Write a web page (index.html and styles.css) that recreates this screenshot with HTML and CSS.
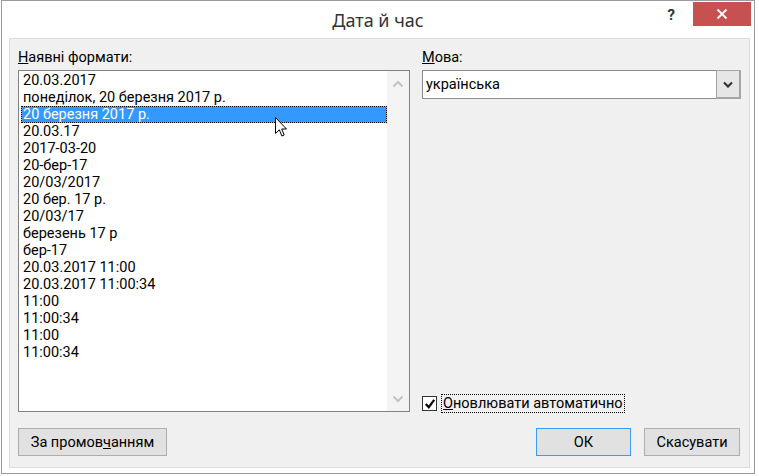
FILE: index.html
```html
<!DOCTYPE html>
<html lang="uk">
<head>
<meta charset="UTF-8">
<meta name="viewport" content="width=device-width, initial-scale=1.0">
<title>Дата й час</title>
<link rel="stylesheet" href="styles.css">
</head>
<body>
<div class="window">
    <div class="titlebar">
        <div></div>
        <div class="title">Дата й час</div>
        <div class="controls">
            <span class="help">?</span>
            <span class="close">
                <svg width="12" height="12" viewBox="0 0 12 12"><path d="M1.5 1.5 L10.5 10.5 M10.5 1.5 L1.5 10.5" stroke="#fff" stroke-width="1.8" fill="none"/></svg>
            </span>
        </div>
    </div>
    <div class="panel">
        <div class="main">
            <div class="col-left">
                <div class="label"><u>Н</u>аявні формати:</div>
                <div class="listbox">
                    <ul class="items">
                        <li>20.03.2017</li>
                        <li>понеділок, 20 березня 2017 р.</li>
                        <li class="selected">20 березня 2017 р.</li>
                        <li>20.03.17</li>
                        <li>2017-03-20</li>
                        <li>20-бер-17</li>
                        <li>20/03/2017</li>
                        <li>20 бер. 17 р.</li>
                        <li>20/03/17</li>
                        <li>березень 17 р</li>
                        <li>бер-17</li>
                        <li>20.03.2017 11:00</li>
                        <li>20.03.2017 11:00:34</li>
                        <li>11:00</li>
                        <li>11:00:34</li>
                        <li>11:00</li>
                        <li>11:00:34</li>
                    </ul>
                    <div class="scrollbar">
                        <svg width="12" height="8" viewBox="0 0 12 8"><path d="M1.5 6.5 L6 2 L10.5 6.5" stroke="#c2c2c2" stroke-width="2" fill="none"/></svg>
                        <svg width="12" height="8" viewBox="0 0 12 8"><path d="M1.5 1.5 L6 6 L10.5 1.5" stroke="#c2c2c2" stroke-width="2" fill="none"/></svg>
                    </div>
                    <!-- mouse pointer sitting over the list -->
                    <svg class="cursor" width="13" height="21" viewBox="0 0 13 21"><path d="M0.5 0.5 L0.5 16.5 L4.3 12.8 L6.9 19 L9.2 18 L6.7 12 L11.5 12 Z" fill="#fff" stroke="#000" stroke-width="1"/></svg>
                </div>
            </div>
            <div class="col-right">
                <div class="label"><u>М</u>ова:</div>
                <div class="select">
                    <span class="select-text">українська</span>
                    <span class="select-btn">
                        <svg width="10" height="7" viewBox="0 0 10 7"><path d="M1 1.5 L5 5.5 L9 1.5" stroke="#333" stroke-width="2.2" fill="none"/></svg>
                    </span>
                </div>
                <div class="check">
                    <span class="box">
                        <svg width="12" height="12" viewBox="0 0 12 12"><path d="M1.8 6 L4.8 9.2 L10.2 1.8" stroke="#000" stroke-width="2.2" fill="none"/></svg>
                    </span>
                    <span class="check-text"><u>О</u>новлювати автоматично</span>
                </div>
            </div>
        </div>
        <div class="buttons">
            <button class="btn btn-wide">За промов<u>ч</u>анням</button>
            <div class="spacer"></div>
            <button class="btn btn-default">ОК</button>
            <button class="btn">Скасувати</button>
        </div>
    </div>
</div>
</body>
</html>
```

FILE: styles.css
```css
body {
    margin: 0;
    background-color: #fff;
    font-family: Roboto, "Noto Sans", sans-serif;
    font-size: 14.5px;
    color: #000;
}

.window {
    width: 754px;
    height: 474px;
    margin-left: 1px;
    box-sizing: border-box;
    border: 1px solid #9b9b9b;
    background-color: #fff;
    display: flex;
    flex-direction: column;
}

.titlebar {
    height: 37px;
    display: grid;
    grid-template-columns: 1fr auto 1fr;
}

.title {
    font-family: "Noto Sans", sans-serif;
    font-size: 18px;
    color: #333;
    line-height: 24px;
    padding-top: 7px;
}

.controls {
    display: flex;
    justify-content: flex-end;
    align-items: flex-start;
    margin-right: 3px;
    margin-top: 1px;
}

.help {
    font-size: 15px;
    font-weight: bold;
    color: #333;
    line-height: 18px;
    margin-top: 4px;
    margin-right: 18px;
}

.close {
    width: 58px;
    height: 24px;
    background-color: #c75050;
    display: flex;
    justify-content: center;
    align-items: center;
}

.panel {
    margin: 0 4px 5px 7px;
    height: 430px;
    box-sizing: border-box;
    border: 1px solid #dcdcdc;
    background-color: #f0f0f0;
    padding: 10px 8px 11px 8px;
    display: flex;
    flex-direction: column;
}

.main {
    display: flex;
    gap: 12px;
}

.col-left {
    width: 392px;
}

.col-right {
    width: 319px;
    display: flex;
    flex-direction: column;
}

.label {
    line-height: 17px;
    margin-bottom: 4px;
}

.listbox {
    position: relative;
    height: 342px;
    box-sizing: border-box;
    border: 1px solid #828282;
    background-color: #fff;
    display: flex;
}

.items {
    list-style: none;
    margin: 0;
    padding: 1px 0 0 2px;
    flex: 1;
}

.items li {
    height: 17px;
    padding-left: 2px;
    line-height: 17px;
    white-space: nowrap;
}

.items li.selected {
    color: #fff;
    background-color: #3399ff;
    box-shadow: inset 0 0 0 1px #f39a1e;
    outline: 1px dotted #000;
    outline-offset: -1px;
}

.scrollbar {
    width: 22px;
    background-color: #f4f4f4;
    display: flex;
    flex-direction: column;
    justify-content: space-between;
    align-items: center;
    padding: 9px 0 8px;
}

.cursor {
    position: absolute;
    left: 256px;
    top: 46px;
}

.select {
    height: 29px;
    box-sizing: border-box;
    border: 1px solid #8c8c8c;
    background-color: #fff;
    display: flex;
}

.select-text {
    flex: 1;
    line-height: 27px;
    padding-left: 3px;
}

.select-btn {
    width: 22px;
    margin: -1px -1px -1px 0;
    border: 1px solid #a5a5a5;
    border-right-width: 2px;
    border-bottom-width: 2px;
    background-color: #e6e6e6;
    display: flex;
    justify-content: center;
    align-items: center;
}

.check {
    margin-top: auto;
    margin-bottom: -1px;
    display: flex;
    align-items: center;
}

.box {
    width: 15px;
    height: 15px;
    box-sizing: border-box;
    border: 1px solid #333;
    background-color: #fff;
    display: flex;
    justify-content: center;
    align-items: center;
    margin-right: 4px;
}

.check-text {
    border: 1px dotted #000;
    padding: 0 1px;
    line-height: 17px;
}

.buttons {
    margin-top: 16px;
    display: flex;
    gap: 13px;
    padding-right: 1px;
}

.spacer {
    flex: 1;
}

.btn {
    height: 28px;
    min-width: 96px;
    padding: 0 10px;
    font-family: inherit;
    font-size: 14.5px;
    color: #000;
    background-color: #e1e1e1;
    border: 1px solid #adadad;
}

.btn-wide {
    width: 149px;
}

.btn-default {
    width: 95px;
    min-width: 0;
    border-color: #3c9af0;
}
```
